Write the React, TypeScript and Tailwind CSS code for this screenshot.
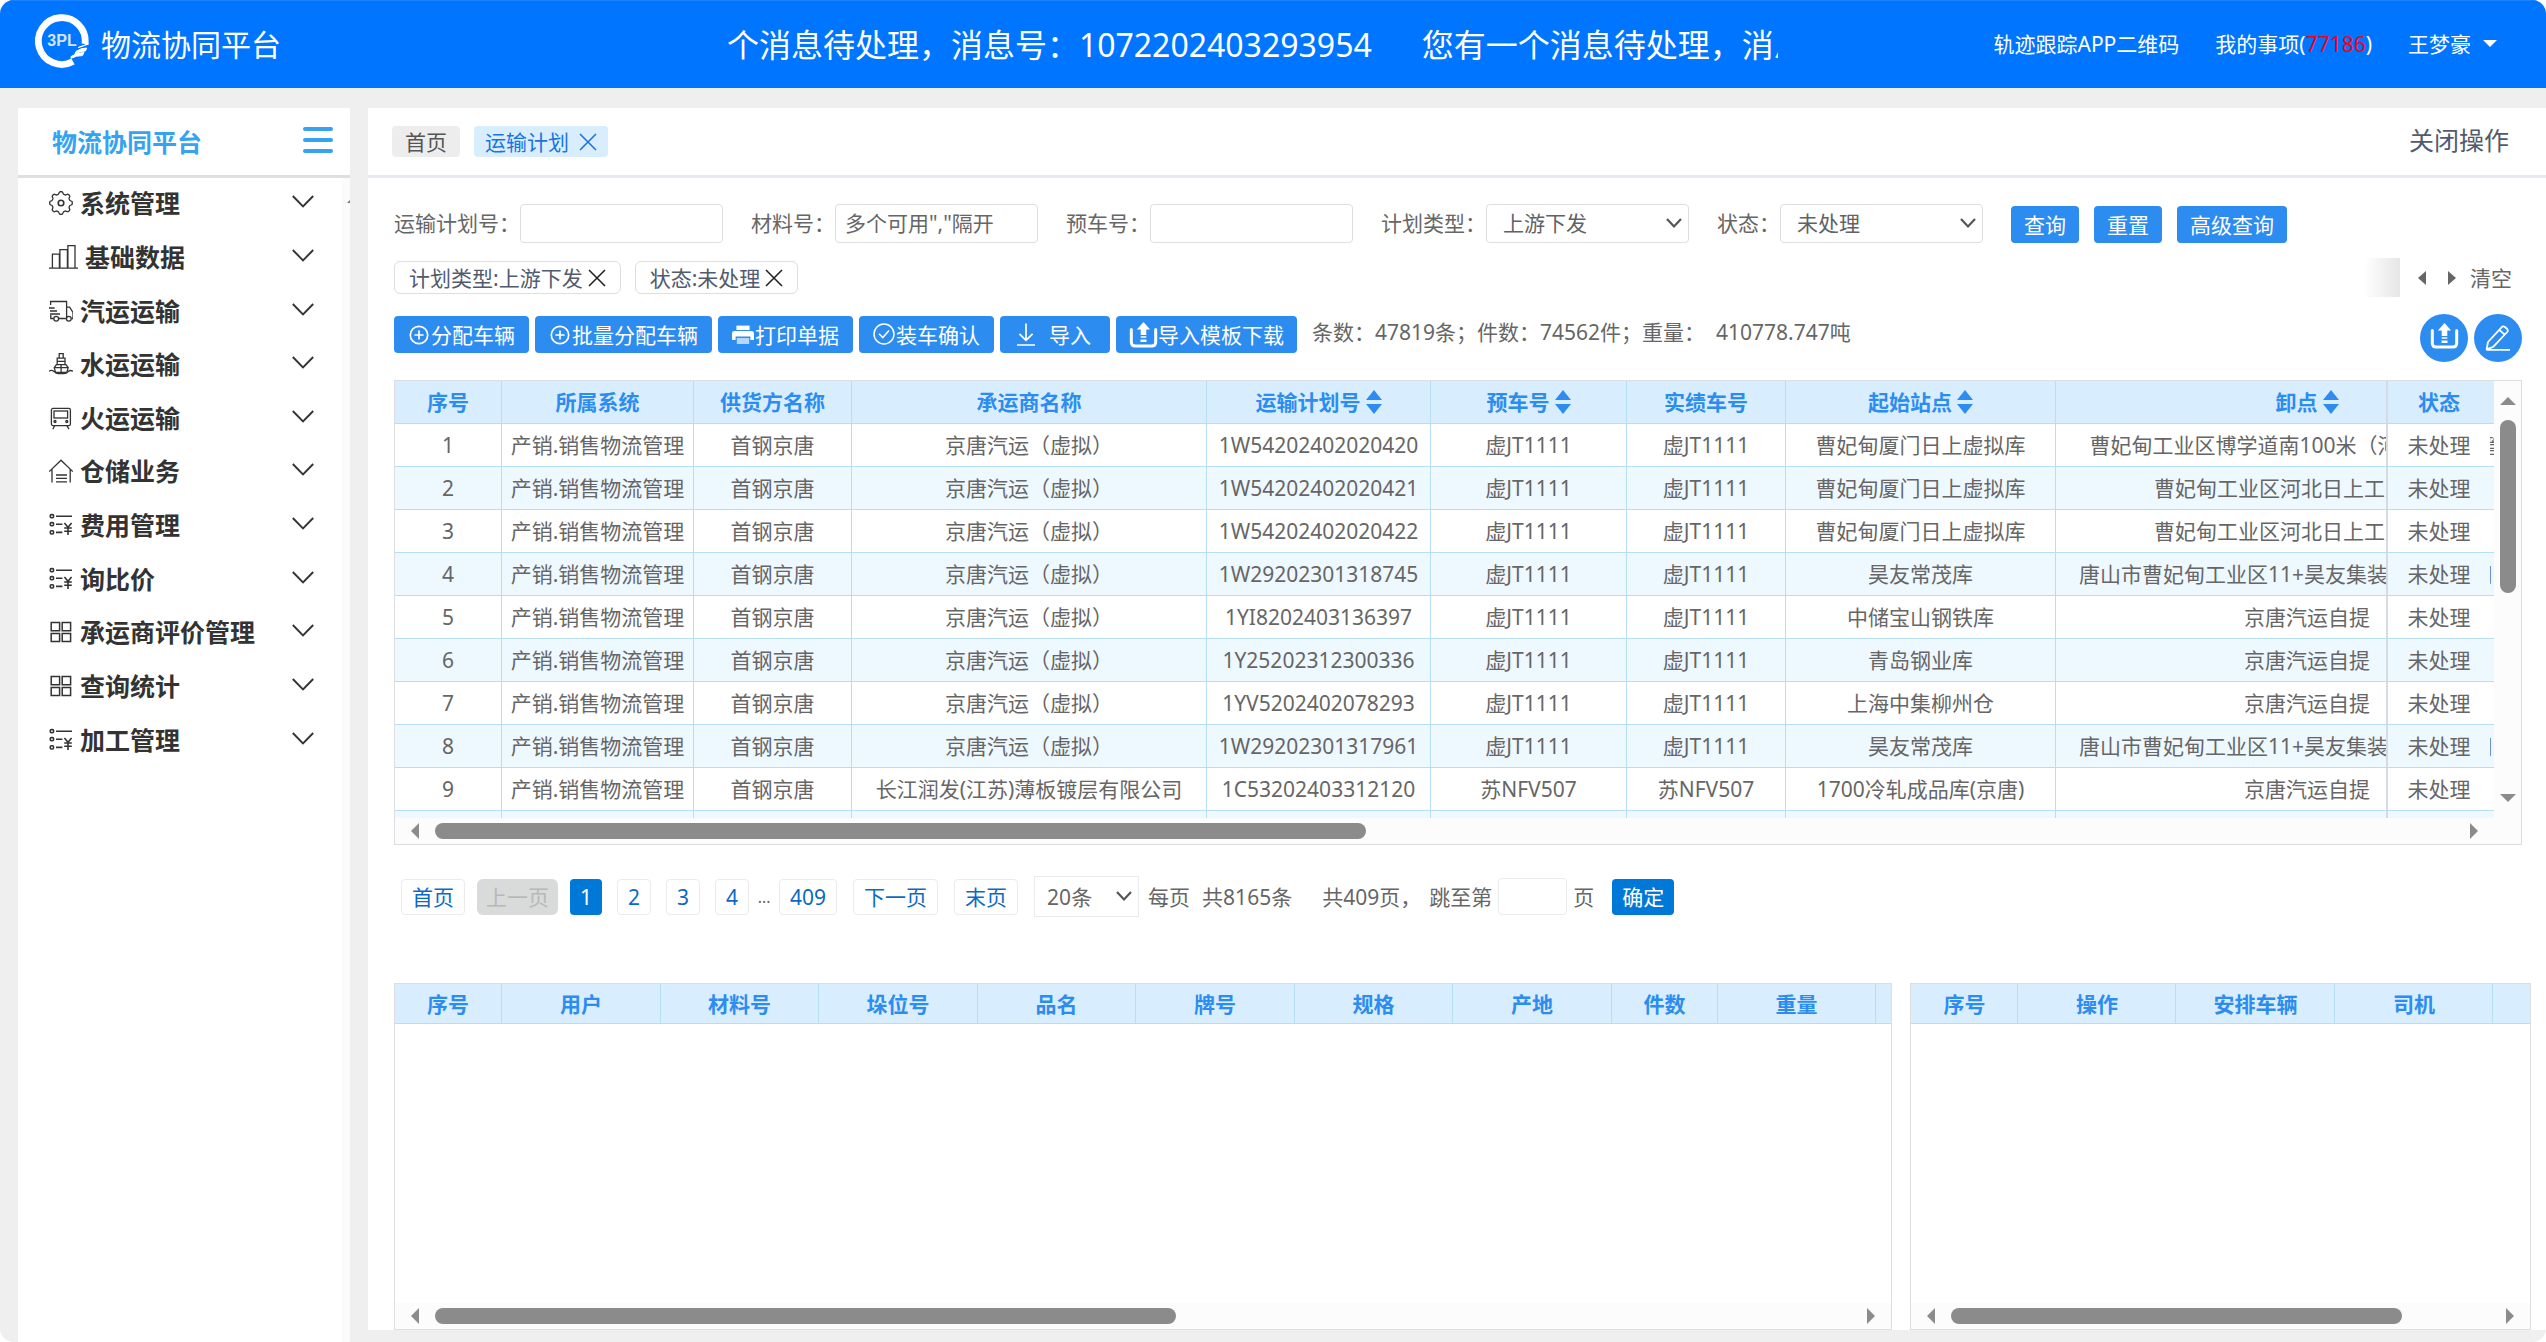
import React from "react";

const FONT = "font-['Noto_Sans','Noto_Sans_CJK_SC',sans-serif]";

/* ---------- icons ---------- */

const GEAR_PATH =
  Array.from({ length: 97 }, (_, i) => {
    const a = (i / 96) * Math.PI * 2;
    const r = 10.2 + 1.1 * Math.tanh(2.4 * Math.cos(8 * a));
    return `${i ? "L" : "M"}${(12 + r * Math.cos(a)).toFixed(2)} ${(12 + r * Math.sin(a)).toFixed(2)}`;
  }).join("") + "Z";

function Glyph({ children, className = "w-6", box = "0 0 24 24" }: { children: React.ReactNode; className?: string; box?: string }) {
  return (
    <svg viewBox={box} className={`h-6 shrink-0 ${className}`} fill="none" stroke="currentColor" strokeWidth="1.3" aria-hidden="true">
      {children}
    </svg>
  );
}

const GearIcon = () => (
  <Glyph>
    <path d={GEAR_PATH} />
    <circle cx="12" cy="12" r="2.8" strokeWidth="1.6" />
  </Glyph>
);
const BarsIcon = () => (
  <Glyph className="w-[29px]" box="0 0 29 24">
    <path d="M0 23.2H29M3.4 23V9.2H10.4V23M10.9 23V4.6H18.4V23M18.9 23V.7H26V23" />
  </Glyph>
);
const TruckIcon = () => (
  <Glyph>
    <path d="M1.6 6V2.5H17.6V19.5M17.6 8.2H20.6L24 13.4V19.5H22.4M1.8 16V19.5H4.6M9.8 19.5H16.8M0 9H5.6M1 12H8M1 15H11" />
    <circle cx="7.2" cy="19.8" r="2.4" />
    <circle cx="19.8" cy="19.8" r="2.4" />
  </Glyph>
);
const ShipIcon = () => (
  <Glyph>
    <path d="M10.2 6V1.6H14.2V6M8.2 12.4V6.2H16V12.4M8.4 9.3H16M12.1 12.4V21M5.2 15.6L7.4 12.6H17L19.2 15.6L17.8 20.4H6.6Z" />
    <path d="M0 19.2Q2.6 17.4 5 19.6T9.6 21.6H14.8Q17.4 21.6 19.2 19.6T24 19.2M5.2 15.6H19.2" />
  </Glyph>
);
const TrainIcon = () => (
  <Glyph>
    <rect x="2.4" y="2.4" width="19" height="17.2" rx="1.6" />
    <rect x="5" y="5" width="13.6" height="7" />
    <circle cx="6" cy="15.5" r="1" />
    <circle cx="17.8" cy="15.5" r="1" />
    <path d="M5.6 19.8L3.8 23.2M18 19.8L20 23.2" />
  </Glyph>
);
const WarehouseIcon = () => (
  <Glyph>
    <path d="M.2 12.6L12 1.2L23.8 12.6M3 10.4V23.6M21.2 10.4V23.6M7 16H18M7 19.4H18M7 22.8H18" />
  </Glyph>
);
const FeeIcon = () => (
  <Glyph>
    <g strokeWidth="1.6">
      <rect x="1.3" y="1.6" width="3.2" height="3.2" rx="1" />
      <rect x="1.3" y="9.6" width="3.2" height="3.2" rx="1" />
      <rect x="1.3" y="17.8" width="3.2" height="3.2" rx="1" />
      <path d="M7 3.2H23M7 11.2H13.4M7 19.4H13.4M15.4 10L19 14.2L22.6 10M15.2 15H22.8M15.2 18.2H22.8M19 14V22" />
    </g>
  </Glyph>
);
const GridIcon = () => (
  <Glyph>
    <path strokeWidth="1.5" d="M2.2 2.4H10.6V10.8H2.2ZM13.2 2.4H21.6V10.8H13.2ZM2.2 13.4H10.6V21.6H2.2ZM13.2 13.4H21.6V21.6H13.2Z" />
  </Glyph>
);

const PlusCircleIcon = () => (
  <svg viewBox="0 0 24 24" className="h-6 w-6 shrink-0" fill="none" stroke="currentColor" strokeWidth="1.7" aria-hidden="true">
    <circle cx="12" cy="12" r="8.7" />
    <path d="M12 7.4V16.6M7.4 12H16.6" />
  </svg>
);
const CheckCircleIcon = () => (
  <svg viewBox="0 0 24 24" className="h-6 w-6 shrink-0" fill="none" stroke="currentColor" strokeWidth="1.5" aria-hidden="true">
    <circle cx="12" cy="11" r="10" />
    <path d="M7 10.8L10.8 14.6L17 7.6" />
  </svg>
);
const PrinterIcon = () => (
  <svg viewBox="0 0 24 24" className="h-6 w-6 shrink-0" fill="currentColor" aria-hidden="true">
    <path d="M5.4 2.6H18.6V7H5.4Z" />
    <path d="M3.4 8H20.6Q23 8 23 10.4V17H19.4V13.6H4.6V17H1V10.4Q1 8 3.4 8Z" />
    <path d="M5.8 15H18.2V21H5.8Z" opacity=".65" />
  </svg>
);
const DownloadIcon = () => (
  <svg viewBox="0 0 24 24" className="mr-3 h-6 w-6 shrink-0" fill="none" stroke="currentColor" strokeWidth="1.7" aria-hidden="true">
    <path d="M13 .6V17.2M6.4 10.8L13 17.4L19.6 10.8M4 22H22" />
  </svg>
);
const UploadIcon = ({ className }: { className: string }) => (
  <svg viewBox="0 0 28 26" className={`shrink-0 ${className}`} aria-hidden="true">
    <path d="M1.8 7.5V20Q1.8 24 5.8 24H22.2Q26.2 24 26.2 20V7.5" fill="none" stroke="currentColor" strokeWidth="3" strokeLinecap="round" />
    <path d="M14 0L20.6 7.6H16.8V13H11.2V7.6H7.4ZM11.2 14.2H16.8V15.8H11.2ZM11 17.4H17V20H11Z" fill="currentColor" />
  </svg>
);
const PencilIcon = () => (
  <svg viewBox="0 0 26 26" className="h-[26px] w-[26px]" fill="none" stroke="currentColor" strokeWidth="1.8" strokeLinejoin="round" aria-hidden="true">
    <path d="M1.6 24.4L3 17L17 1.8Q18.4 .8 20 2L22.2 4Q23.4 5.4 22.2 7L8.2 21.8ZM14.4 4.8L19.6 9.6M1.6 24.8H25" />
  </svg>
);

function Chevron({ className }: { className: string }) {
  return (
    <svg viewBox="0 0 22 13" className={className} fill="none" stroke="currentColor" aria-hidden="true">
      <path d="M.8 1L11 11.4L21.2 1" strokeWidth="1.9" />
    </svg>
  );
}
function SelectChevron({ className }: { className: string }) {
  return (
    <svg viewBox="0 0 16 10" className={`pointer-events-none absolute h-[10px] w-4 ${className}`} fill="none" stroke="#555" aria-hidden="true">
      <path d="M1 1L8 8.4L15 1" strokeWidth="2.2" />
    </svg>
  );
}
function Cross({ className }: { className: string }) {
  return (
    <svg viewBox="0 0 18 18" className={className} fill="none" stroke="currentColor" strokeWidth="1.6" aria-hidden="true">
      <path d="M1 1L17 17M17 1L1 17" />
    </svg>
  );
}
function Arrow({ points, className }: { points: string; className: string }) {
  return (
    <svg viewBox="0 0 16 16" preserveAspectRatio="none" className={`shrink-0 ${className}`} fill="currentColor" aria-hidden="true">
      <polygon points={points} />
    </svg>
  );
}
const LEFT = "16,0 16,16 0,8";
const RIGHT = "0,0 0,16 16,8";
const UP = "0,16 16,16 8,0";
const DOWN = "0,0 16,0 8,16";

function SortIcon() {
  return (
    <span className="flex flex-col gap-1">
      <Arrow points={UP} className="h-[10px] w-4" />
      <Arrow points={DOWN} className="h-[10px] w-4" />
    </span>
  );
}

function Logo() {
  return (
    <svg viewBox="0 0 54 54" className="h-[54px] w-[54px] shrink-0" aria-hidden="true">
      <path d="M50 30A23.4 23.4 0 1 0 38 47.6" fill="none" stroke="#fff" strokeWidth="6.8" />
      <path d="M53 30L43 33.6L53.4 30ZM41 37.4Q46 34 51.6 34L50.4 37Q45 37 40 40ZM36 42.6Q42 38.4 49 38.6L47.4 41.6Q41 41.4 36 44.4Z" fill="#fff" stroke="#fff" strokeWidth="1" />
      <text x="27" y="32" textAnchor="middle" fontSize="16" fontWeight="700" fill="#cfe6ff" fontFamily="Liberation Sans, sans-serif">3PL</text>
    </svg>
  );
}

/* ---------- data ---------- */

const MENU: [string, () => React.ReactElement][] = [
  ["系统管理", GearIcon],
  ["基础数据", BarsIcon],
  ["汽运运输", TruckIcon],
  ["水运运输", ShipIcon],
  ["火运运输", TrainIcon],
  ["仓储业务", WarehouseIcon],
  ["费用管理", FeeIcon],
  ["询比价", FeeIcon],
  ["承运商评价管理", GridIcon],
  ["查询统计", GridIcon],
  ["加工管理", FeeIcon],
];

const V = "京唐汽运（虚拟）";
const A = "曹妃甸厦门日上虚拟库";
const ADDR1 = "曹妃甸工业区博学道南100米（河北日上仓管）";
const ADDR2 = "曹妃甸工业区河北日上工厂院内1";
const ADDR3 = "唐山市曹妃甸工业区11+昊友集装箱有限公司院内";
const ROWS = [
  [V, "1W54202402020420", "虚JT1111", A, ADDR1],
  [V, "1W54202402020421", "虚JT1111", A, ADDR2],
  [V, "1W54202402020422", "虚JT1111", A, ADDR2],
  [V, "1W29202301318745", "虚JT1111", "昊友常茂库", ADDR3],
  [V, "1YI8202403136397", "虚JT1111", "中储宝山钢铁库", "京唐汽运自提"],
  [V, "1Y25202312300336", "虚JT1111", "青岛钢业库", "京唐汽运自提"],
  [V, "1YV5202402078293", "虚JT1111", "上海中集柳州仓", "京唐汽运自提"],
  [V, "1W29202301317961", "虚JT1111", "昊友常茂库", ADDR3],
  ["长江润发(江苏)薄板镀层有限公司", "1C53202403312120", "苏NFV507", "1700冷轧成品库(京唐)", "京唐汽运自提"],
  [V, "1C53202403312121", "虚JT1111", A, "京唐汽运自提"],
];

const COLS: { name: string; width: string; sort?: boolean }[] = [
  { name: "序号", width: "w-[107px]" },
  { name: "所属系统", width: "w-[192px]" },
  { name: "供货方名称", width: "w-[158px]" },
  { name: "承运商名称", width: "w-[355px]" },
  { name: "运输计划号", width: "w-[224px]", sort: true },
  { name: "预车号", width: "w-[196px]", sort: true },
  { name: "实绩车号", width: "w-[159px]" },
  { name: "起始站点", width: "w-[270px]", sort: true },
  { name: "卸点", width: "w-[503px]", sort: true },
];

/* ---------- pieces ---------- */

function HScroll({ thumb }: { thumb: string }) {
  return (
    <div className="flex h-[26px] items-center gap-4 bg-[#fcfcfc] px-4 text-[#8b8b8b]">
      <Arrow points={LEFT} className="h-4 w-2" />
      <div className="flex-1">
        <div className={`h-4 rounded-full bg-[#8b8b8b] ${thumb}`} />
      </div>
      <Arrow points={RIGHT} className="h-4 w-2" />
    </div>
  );
}

function TextField({ id, label, placeholder }: { id: string; label: string; placeholder?: string }) {
  return (
    <div className="flex items-center">
      <label htmlFor={id} className="whitespace-nowrap">{label}：</label>
      <input
        id={id}
        type="text"
        placeholder={placeholder}
        className="h-[39px] w-[203px] rounded border border-[#dcdee2] bg-white px-[9px] text-[21px] text-[#606266] outline-none placeholder:text-[#666]"
      />
    </div>
  );
}

function SelectField({ id, label, value }: { id: string; label: string; value: string }) {
  return (
    <div className="flex items-center">
      <label htmlFor={id} className="whitespace-nowrap">{label}：</label>
      <div className="relative">
        <select id={id} className="h-[39px] w-[203px] appearance-none rounded border border-[#dcdee2] bg-white pl-4 text-[21px] text-[#606266] outline-none">
          <option>{value}</option>
        </select>
        <SelectChevron className="top-[14px] right-[7px]" />
      </div>
    </div>
  );
}

function Btn({ children, className = "px-[13px]" }: { children: React.ReactNode; className?: string }) {
  return (
    <button type="button" className={`flex h-[37px] items-center rounded bg-[#2d8cf0] leading-[30px] whitespace-nowrap text-white ${className}`}>
      {children}
    </button>
  );
}

function Chip({ text }: { text: string }) {
  return (
    <span className="flex h-[33px] items-center gap-[5px] rounded-md border border-[#dcdee2] px-[14px] leading-[30px] whitespace-nowrap text-[#515a6e]">
      {text}
      <button type="button" aria-label={`移除${text}`}>
        <Cross className="h-[18px] w-[18px] text-[#222]" />
      </button>
    </span>
  );
}

function PageBtn({ children }: { children: React.ReactNode }) {
  return (
    <button type="button" className="h-9 rounded border border-[#ebebeb] px-[10px] leading-[34px] whitespace-nowrap text-[#0b6bc2]">
      {children}
    </button>
  );
}

function DetailTable({ cols, thumb, grow, label }: { cols: [string, string][]; thumb: string; grow: string; label: string }) {
  return (
    <section className={`flex min-w-0 flex-col overflow-hidden border border-[#dcdee2] bg-white ${grow}`} aria-label={label}>
      <table className="w-full table-fixed border-separate border-spacing-0">
        <thead>
          <tr className="h-10 bg-[#d8eefe] text-[#2d8cf0]">
            {cols.map(([name, width]) => (
              <th key={name} className={`border-r border-b border-[#b8def5] p-0 font-bold ${width}`}>{name}</th>
            ))}
            <th className="border-b border-[#b8def5] p-0" />
          </tr>
        </thead>
      </table>
      <div className="flex-1" />
      <HScroll thumb={thumb} />
    </section>
  );
}

/* ---------- page ---------- */

export default function App() {
  return (
    <div className={`flex min-h-screen flex-col overflow-hidden rounded-[14px] bg-[#efefef] text-[21px] leading-[30px] text-[#666] ${FONT}`}>
      <header className="flex h-[88px] items-center border-t border-[#1a82ff] bg-[#0075ff] text-white">
        <div className="flex w-[28.55%] items-center gap-3 pb-[8px] pl-[35px]">
          <Logo />
          <h1 className="pt-2 text-[30px] leading-10 font-normal">物流协同平台</h1>
        </div>
        <div className="flex w-[41.3%] gap-[50px] overflow-hidden text-[32px] leading-[44px] whitespace-nowrap">
          <span>个消息待处理，消息号：1072202403293954</span>
          <span>您有一个消息待处理，消息号：1072202403293954</span>
        </div>
        <nav className="flex flex-1 items-center justify-end gap-9 pr-[49px] pb-[2px] whitespace-nowrap">
          <a href="#app">轨迹跟踪APP二维码</a>
          <a href="#todo">我的事项(<span className="text-[#f5001d]">77186</span>)</a>
          <button type="button" className="flex items-center gap-3">
            王梦豪
            <Arrow points={DOWN} className="h-[7px] w-[14px]" />
          </button>
        </nav>
      </header>

      <div className="flex flex-1 gap-[18px] pt-5 pl-[18px]">
        <aside className="flex w-[332px] shrink-0 flex-col bg-white">
          <div className="flex h-[70px] items-center justify-between border-b-[3px] border-[#dfdfdf] pr-[17px] pl-[34px]">
            <h2 className="text-[25px] font-bold text-[#36a3f0]">物流协同平台</h2>
            <button type="button" aria-label="折叠菜单" className="flex w-[30px] flex-col gap-[7px] pb-1">
              <span className="h-1 rounded-full bg-[#36a3f0]" />
              <span className="h-1 rounded-full bg-[#36a3f0]" />
              <span className="h-1 rounded-full bg-[#36a3f0]" />
            </button>
          </div>
          <div className="flex flex-1">
            <ul className="grid h-[590px] flex-1 auto-rows-fr text-[25px] font-bold text-[#333]">
              {MENU.map(([name, Icon]) => (
                <li key={name} className="flex">
                  <button type="button" className="flex flex-1 items-center pr-[28px] pb-[3px] pl-[31px]">
                    <Icon />
                    <span className="ml-[7px] flex-1 text-left">{name}</span>
                    <Chevron className="mb-[3px] h-[13px] w-[22px]" />
                  </button>
                </li>
              ))}
            </ul>
            <div className="flex w-2 justify-end overflow-hidden bg-[#fbfbfb] pt-[22px]">
              <Arrow points="16,16 0,16 16,0" className="h-[3px] w-[3px] text-[#777]" />
            </div>
          </div>
        </aside>

        <main className="mb-3 flex min-w-0 flex-1 flex-col bg-white">
          <div className="flex h-[70px] items-center border-b-[3px] border-[#e8e9ee] pr-[37px] pl-6">
            <button type="button" className="h-[31px] rounded bg-[#ededed] px-[13px] text-[#555]">首页</button>
            <span className="ml-[14px] flex h-[31px] items-center gap-[10px] rounded bg-[#d8eefe] px-[11px] text-[#1a73e0]">
              运输计划
              <button type="button" aria-label="关闭运输计划">
                <Cross className="h-[18px] w-[18px]" />
              </button>
            </span>
            <button type="button" className="ml-auto pb-1 text-[25px] text-[#515a6e]">关闭操作</button>
          </div>

          <div className="flex flex-1 flex-col pt-[25px] pr-[15px] pl-[26px]">
            <form className="flex items-center gap-7">
              <TextField id="plan" label="运输计划号" />
              <TextField id="material" label="材料号" placeholder={'多个可用","隔开'} />
              <TextField id="car" label="预车号" />
              <SelectField id="type" label="计划类型" value="上游下发" />
              <SelectField id="state" label="状态" value="未处理" />
              <div className="flex gap-[15px] pt-[3px]">
                <Btn>查询</Btn>
                <Btn>重置</Btn>
                <Btn>高级查询</Btn>
              </div>
            </form>

            <div className="mt-[15px] flex h-[39px] items-center gap-[14px] pr-[19px]">
              <Chip text="计划类型:上游下发" />
              <Chip text="状态:未处理" />
              <span className="ml-auto h-full w-9 bg-gradient-to-l from-[#e6e6e6] to-white" />
              <div className="flex items-center gap-[22px] pl-1">
                <button type="button" aria-label="向左"><Arrow points={LEFT} className="h-[14px] w-2" /></button>
                <button type="button" aria-label="向右"><Arrow points={RIGHT} className="h-[14px] w-2" /></button>
              </div>
              <button type="button">清空</button>
            </div>

            <div className="mt-[17px] flex h-12 items-start gap-[6px] pr-[9px]">
              <div className="flex gap-[6px] pt-[2px]">
                <Btn className="pr-[14px] pl-[13px]"><PlusCircleIcon />分配车辆</Btn>
                <Btn className="pr-[14px] pl-[13px]"><PlusCircleIcon />批量分配车辆</Btn>
                <Btn className="pr-[14px] pl-[13px]"><PrinterIcon />打印单据</Btn>
                <Btn className="pr-[14px] pl-[13px]"><CheckCircleIcon />装车确认</Btn>
                <Btn className="pr-[19px] pl-[13px]"><DownloadIcon />导入</Btn>
                <Btn><UploadIcon className="h-[26px] w-[29px]" />导入模板下载</Btn>
              </div>
              <p className="ml-[9px] pt-[3px] whitespace-nowrap">条数：47819条；件数：74562件；重量：&nbsp; 410778.747吨</p>
              <div className="ml-auto flex gap-[6px] text-white">
                <button type="button" aria-label="上传" className="flex h-12 w-12 items-center justify-center rounded-full bg-[#2d8cf0]">
                  <UploadIcon className="mb-1 h-[26px] w-[29px]" />
                </button>
                <button type="button" aria-label="编辑" className="flex h-12 w-12 items-center justify-center rounded-full bg-[#2d8cf0]">
                  <PencilIcon />
                </button>
              </div>
            </div>

            <section className="mt-[18px] mr-[9px] border border-[#dcdee2]" aria-label="运输计划">
              <div className="flex h-[437px]">
                <div className="min-w-0 flex-1 overflow-hidden">
                  <table className="w-[2268px] table-fixed border-separate border-spacing-0 text-center whitespace-nowrap">
                    <thead>
                      <tr className="h-[43px] bg-[#d8eefe] text-[#2d8cf0]">
                        {COLS.map((c) => (
                          <th key={c.name} className={`border-r border-b border-[#b8def5] p-0 font-bold ${c.width}`}>
                            <span className="flex items-center justify-center gap-[5px]">
                              {c.name}
                              {c.sort && <SortIcon />}
                            </span>
                          </th>
                        ))}
                        <th className="sticky right-1 w-[104px] border-b border-l-2 border-b-[#b8def5] border-l-[#d6dbe2] bg-[#d8eefe] p-0 font-bold">状态</th>
                      </tr>
                    </thead>
                    <tbody>
                      {ROWS.map(([carrier, plan, car, start, end], i) => {
                        const cell = "border-r border-b border-[#b8def5] p-0";
                        return (
                          <tr key={plan} className="h-[43px] odd:bg-white even:bg-[#eef8ff]">
                            <td className={cell}>{i + 1}</td>
                            <td className={cell}>产销.销售物流管理</td>
                            <td className={cell}>首钢京唐</td>
                            <td className={cell}>{carrier}</td>
                            <td className={cell}>{plan}</td>
                            <td className={cell}>{car}</td>
                            <td className={cell}>{car}</td>
                            <td className={cell}>{start}</td>
                            <td className={cell}>{end}</td>
                            <td className="sticky right-1 border-b border-l-2 border-b-[#b8def5] border-l-[#d6dbe2] bg-inherit p-0">未处理</td>
                          </tr>
                        );
                      })}
                    </tbody>
                  </table>
                </div>
                <div className="flex w-[27px] flex-col items-center bg-[#fcfcfc] py-4 text-[#8b8b8b]">
                  <Arrow points={UP} className="h-2 w-4" />
                  <div className="mt-[15px] flex-1">
                    <div className="h-[173px] w-4 rounded-full bg-[#8b8b8b]" />
                  </div>
                  <Arrow points={DOWN} className="h-2 w-4" />
                </div>
              </div>
              <div className="bg-[#fcfcfc] pr-[27px]">
                <HScroll thumb="w-[46.1%]" />
              </div>
            </section>

            <div className="mt-[31px] flex h-[41px] items-center gap-4 pl-[7px] whitespace-nowrap">
              <div className="flex items-center gap-[15px]">
                <div className="flex gap-3">
                  <PageBtn>首页</PageBtn>
                  <button type="button" disabled className="h-9 rounded-md bg-[#d9dada] px-[9px] leading-[34px] text-[#b8b8b8]">上一页</button>
                  <button type="button" aria-current="page" className="h-9 rounded bg-[#0078d7] px-[10px] leading-[34px] text-white">1</button>
                </div>
                <PageBtn>2</PageBtn>
                <PageBtn>3</PageBtn>
                <div className="flex items-center gap-2">
                  <PageBtn>4</PageBtn>
                  <span className="w-[14px] text-center text-[16px]">...</span>
                  <PageBtn>409</PageBtn>
                </div>
              </div>
              <PageBtn>下一页</PageBtn>
              <PageBtn>末页</PageBtn>
              <div className="flex items-center">
                <div className="relative">
                  <select aria-label="每页条数" className="h-[41px] w-[105px] appearance-none border border-[#ebebeb] bg-white pl-3 text-[21px] outline-none">
                    <option>20条</option>
                  </select>
                  <SelectChevron className="top-[15px] right-[7px]" />
                </div>
                <span className="ml-[9px]">每页</span>
                <span className="ml-3">共8165条</span>
                <span className="ml-[30px]">共409页，</span>
                <label htmlFor="jump" className="ml-2">跳至第</label>
                <input id="jump" type="text" className="mx-[6px] h-[37px] w-[69px] rounded border border-[#ebebeb] bg-white px-2 outline-none" />
                <span>页</span>
                <button type="button" className="ml-[18px] h-9 rounded-sm bg-[#0078d7] px-[10px] leading-[34px] text-white">确定</button>
              </div>
            </div>

            <div className="mt-[66px] flex flex-1 gap-[18px]">
              <DetailTable
                label="材料明细"
                grow="flex-[1500]"
                thumb="w-[52.3%]"
                cols={[
                  ["序号", "w-[107px]"],
                  ["用户", "w-[159px]"],
                  ["材料号", "w-[158px]"],
                  ["垛位号", "w-[159px]"],
                  ["品名", "w-[158px]"],
                  ["牌号", "w-[159px]"],
                  ["规格", "w-[158px]"],
                  ["产地", "w-[159px]"],
                  ["件数", "w-[106px]"],
                  ["重量", "w-[158px]"],
                ]}
              />
              <DetailTable
                label="车辆安排"
                grow="flex-[620]"
                thumb="w-[83.7%]"
                cols={[
                  ["序号", "w-[107px]"],
                  ["操作", "w-[158px]"],
                  ["安排车辆", "w-[159px]"],
                  ["司机", "w-[158px]"],
                ]}
              />
            </div>
          </div>
        </main>
      </div>
    </div>
  );
}
